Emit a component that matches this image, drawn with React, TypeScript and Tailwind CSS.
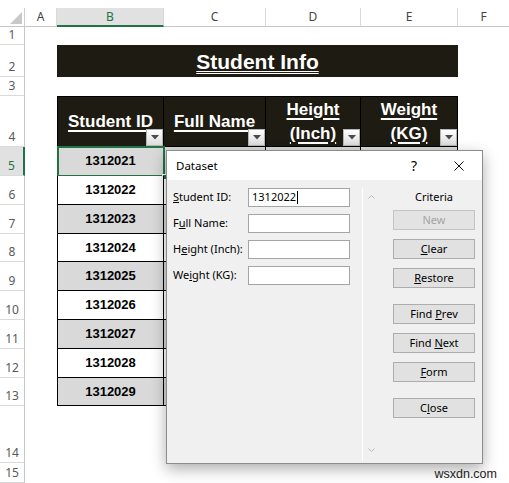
import React from "react";

const rows = [
  { n: 5, id: "1312021", h: "h-[29px]", grey: true },
  { n: 6, id: "1312022", h: "h-[29px]", grey: false },
  { n: 7, id: "1312023", h: "h-[29px]", grey: true },
  { n: 8, id: "1312024", h: "h-[28px]", grey: false },
  { n: 9, id: "1312025", h: "h-[29px]", grey: true },
  { n: 10, id: "1312026", h: "h-[29px]", grey: false },
  { n: 11, id: "1312027", h: "h-[29px]", grey: true },
  { n: 12, id: "1312028", h: "h-[29px]", grey: false },
  { n: 13, id: "1312029", h: "h-[28px]", grey: true },
];

function RowHead({ n, active }: { n: number; active?: boolean }) {
  return active ? (
    <div className="w-[25px] shrink-0 border-r-2 border-r-[#217346] border-b border-b-[#dadada] bg-[#e1e1e1] flex items-end justify-center pb-[1px] leading-[16px] text-[12px] text-[#217346] font-['Noto_Sans',sans-serif]">
      {n}
    </div>
  ) : (
    <div className="w-[25px] shrink-0 border-r border-r-[#c6c6c6] border-b border-b-[#dadada] flex items-end justify-center pb-[1px] leading-[16px] text-[12px] text-[#595959] font-['Noto_Sans',sans-serif]">
      {n}
    </div>
  );
}

function Filter() {
  return (
    <div className="absolute right-0 bottom-0 w-[17px] h-[17px] border border-[#b5b5b5] bg-linear-to-b from-white to-[#dcdcdc] flex items-center justify-center">
      <svg width="8" height="5" viewBox="0 0 8 5">
        <polygon points="0,0 8,0 4,4.5" fill="#4a4a4a" />
      </svg>
    </div>
  );
}

function Btn({ children, disabled, mt }: { children: React.ReactNode; disabled?: boolean; mt: string }) {
  return disabled ? (
    <div className={`${mt} h-[20px] w-[82px] border border-[#c4c4c4] bg-[#e3e3e3] flex items-center justify-center text-[#a3a3a3]`}>
      {children}
    </div>
  ) : (
    <div className={`${mt} h-[20px] w-[82px] border border-[#adadad] bg-[#e1e1e1] flex items-center justify-center text-black`}>
      {children}
    </div>
  );
}

export default function App() {
  return (
    <div className="relative w-[509px] h-[483px] overflow-hidden bg-white font-['Liberation_Sans',Arial,sans-serif]">
      <div className="h-[8px]" />
      {/* column letters */}
      <div className="flex h-[19px] font-['Noto_Sans',sans-serif] text-[12px] text-[#444]">
        <div className="relative w-[25px] shrink-0 border-r border-r-[#d0d0d0] border-b border-b-[#c6c6c6]">
          <svg className="absolute left-[10px] top-[4px]" width="12" height="12" viewBox="0 0 12 12">
            <polygon points="12,0 12,12 0,12" fill="#c8c8c8" />
          </svg>
        </div>
        <div className="w-[32px] shrink-0 border-r border-r-[#d9d9d9] border-b border-b-[#c6c6c6] flex items-center justify-center">A</div>
        <div className="w-[107px] shrink-0 border-r border-r-[#d9d9d9] border-b-2 border-b-[#217346] bg-[#e1e1e1] flex items-center justify-center text-[#217346]">B</div>
        <div className="w-[102px] shrink-0 border-r border-r-[#d9d9d9] border-b border-b-[#c6c6c6] flex items-center justify-center">C</div>
        <div className="w-[95px] shrink-0 border-r border-r-[#d9d9d9] border-b border-b-[#c6c6c6] flex items-center justify-center">D</div>
        <div className="w-[97px] shrink-0 border-r border-r-[#d9d9d9] border-b border-b-[#c6c6c6] flex items-center justify-center">E</div>
        <div className="flex-1 border-b border-b-[#c6c6c6] flex items-center justify-center">F</div>
      </div>

      {/* row 1 */}
      <div className="flex h-[18px]">
        <RowHead n={1} />
      </div>
      {/* row 2 title */}
      <div className="flex h-[32px]">
        <RowHead n={2} />
        <div className="w-[32px] shrink-0" />
        <div className="w-[401px] shrink-0 bg-[#1e1b12] flex items-center justify-center">
          <span className="text-white font-bold text-[21px] leading-none underline decoration-double decoration-[1px] underline-offset-[2px]">
            Student Info
          </span>
        </div>
      </div>
      {/* row 3 */}
      <div className="flex h-[19px]">
        <RowHead n={3} />
      </div>
      {/* row 4 headers */}
      <div className="flex h-[51px]">
        <RowHead n={4} />
        <div className="w-[32px] shrink-0" />
        <div className="relative w-[107px] shrink-0 bg-[#1e1b12] border border-black flex items-center justify-center text-center text-white font-bold text-[17px] leading-[24px]">
          <span className="underline underline-offset-[3px] decoration-[1.5px]">Student ID</span>
          <Filter />
        </div>
        <div className="relative w-[102px] shrink-0 bg-[#1e1b12] border-y border-r border-black flex items-center justify-center text-center text-white font-bold text-[17px] leading-[24px]">
          <span className="underline underline-offset-[3px] decoration-[1.5px]">Full Name</span>
          <Filter />
        </div>
        <div className="relative w-[95px] shrink-0 bg-[#1e1b12] border-y border-r border-black flex flex-col items-center justify-center text-center text-white font-bold text-[17px] leading-[24px]">
          <span className="underline underline-offset-[3px] decoration-[1.5px]">Height</span>
          <span className="underline underline-offset-[3px] decoration-[1.5px]">(Inch)</span>
          <Filter />
        </div>
        <div className="relative w-[97px] shrink-0 bg-[#1e1b12] border-y border-r border-black flex flex-col items-center justify-center text-center text-white font-bold text-[17px] leading-[24px]">
          <span className="underline underline-offset-[3px] decoration-[1.5px]">Weight</span>
          <span className="underline underline-offset-[3px] decoration-[1.5px]">(KG)</span>
          <Filter />
        </div>
      </div>
      {/* data rows */}
      {rows.map((r) => (
        <div key={r.n} className={`flex ${r.h}`}>
          <RowHead n={r.n} active={r.n === 5} />
          <div className="w-[32px] shrink-0" />
          <div
            className={`relative w-[107px] shrink-0 border-l border-r border-b border-black flex items-center justify-center font-bold text-[13px] text-black ${
              r.grey ? "bg-[#d9d9d9]" : "bg-white"
            }`}
          >
            {r.id}
            {r.n === 5 && (
              <>
                <div className="absolute left-[-1px] top-[-1px] right-[-2px] bottom-[-2px] border-2 border-[#217346]" />
                <div className="absolute right-[-5px] bottom-[-5px] w-[6px] h-[6px] bg-[#217346] border border-white" />
              </>
            )}
          </div>
          <div className={`w-[102px] shrink-0 border-r border-b border-black ${r.grey ? "bg-[#d9d9d9]" : "bg-white"}`} />
          <div className={`w-[95px] shrink-0 border-r border-b border-black ${r.grey ? "bg-[#d9d9d9]" : "bg-white"}`} />
          <div className={`w-[97px] shrink-0 border-r border-b border-black ${r.grey ? "bg-[#d9d9d9]" : "bg-white"}`} />
        </div>
      ))}
      {/* row 14, 15 */}
      <div className="flex h-[57px]">
        <RowHead n={14} />
      </div>
      <div className="flex h-[20px]">
        <RowHead n={15} />
      </div>

      {/* Data form dialog */}
      <div className="absolute left-[166px] top-[150px] w-[317px] h-[314px] border border-[#8c8c8c] bg-[#f0f0f0] shadow-[0_5px_14px_rgba(0,0,0,0.32)] font-['Noto_Sans',sans-serif] text-[11px] text-black flex flex-col">
        <div className="h-[29px] shrink-0 bg-white flex items-center pl-[9px] pr-[18px]">
          <span className="text-[11.5px]">Dataset</span>
          <span className="ml-auto w-[14px] text-center text-[14px] leading-none">?</span>
          <svg className="ml-[33px]" width="10" height="10" viewBox="0 0 10 10">
            <path d="M0.5 0.5 L9.5 9.5 M9.5 0.5 L0.5 9.5" stroke="#111" strokeWidth="1" fill="none" />
          </svg>
        </div>
        <div className="flex flex-1 pt-[8px] pb-[2px]">
          <div className="w-[195px] shrink-0 pl-[6px] flex flex-col gap-[7px]">
            <div className="flex items-center h-[19px]">
              <span className="w-[75px] shrink-0"><u>S</u>tudent ID:</span>
              <div className="w-[102px] h-[19px] border border-[#a5a5a5] bg-white flex items-center pl-[3px]">
                <span>1312022</span>
                <span className="w-px h-[13px] bg-black ml-[1px]" />
              </div>
            </div>
            <div className="flex items-center h-[19px]">
              <span className="w-[75px] shrink-0">F<u>u</u>ll Name:</span>
              <div className="w-[102px] h-[19px] border border-[#a5a5a5] bg-white" />
            </div>
            <div className="flex items-center h-[19px]">
              <span className="w-[75px] shrink-0">H<u>e</u>ight (Inch):</span>
              <div className="w-[102px] h-[19px] border border-[#a5a5a5] bg-white" />
            </div>
            <div className="flex items-center h-[19px]">
              <span className="w-[75px] shrink-0">We<u>i</u>ght (KG):</span>
              <div className="w-[102px] h-[19px] border border-[#a5a5a5] bg-white" />
            </div>
          </div>
          <div className="w-[17px] shrink-0 border-l border-l-white flex flex-col items-center justify-between pt-[7px] pb-[9px]">
            <svg width="7" height="4" viewBox="0 0 7 4">
              <polyline points="0.5,3.5 3.5,0.5 6.5,3.5" stroke="#b8b8b8" strokeWidth="1" fill="none" />
            </svg>
            <svg width="7" height="4" viewBox="0 0 7 4">
              <polyline points="0.5,0.5 3.5,3.5 6.5,0.5" stroke="#b8b8b8" strokeWidth="1" fill="none" />
            </svg>
          </div>
          <div className="flex flex-col pl-[14px]">
            <div className="h-[17px] w-[82px] text-center leading-[17px]">Criteria</div>
            <Btn mt="mt-[5px]" disabled>
              New
            </Btn>
            <Btn mt="mt-[9px]">
              <span><u>C</u>lear</span>
            </Btn>
            <Btn mt="mt-[9px]">
              <span><u>R</u>estore</span>
            </Btn>
            <Btn mt="mt-[16px]">
              <span>Find <u>P</u>rev</span>
            </Btn>
            <Btn mt="mt-[9px]">
              <span>Find <u>N</u>ext</span>
            </Btn>
            <Btn mt="mt-[9px]">
              <span><u>F</u>orm</span>
            </Btn>
            <Btn mt="mt-[16px]">
              <span>C<u>l</u>ose</span>
            </Btn>
          </div>
        </div>
      </div>

      <div className="absolute right-[12px] top-[466px] text-[12.5px] leading-[16px] text-[#222] font-['Liberation_Sans',Arial,sans-serif]">
        wsxdn.com
      </div>
    </div>
  );
}
